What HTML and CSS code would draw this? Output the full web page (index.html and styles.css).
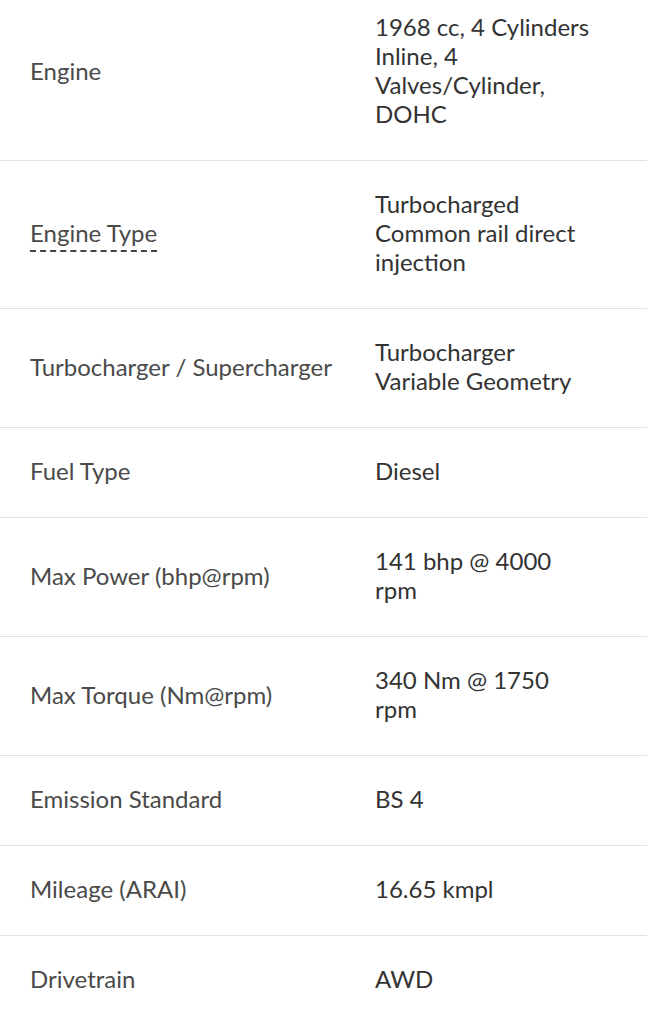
FILE: index.html
```html
<!DOCTYPE html>
<html>
<head>
<meta charset="utf-8">
<link rel="stylesheet" href="styles.css">
</head>
<body>
<table class="spec">
  <tr><td class="label">Engine</td><td class="value"><div class="val">1968 cc, 4 Cylinders Inline, 4 Valves/Cylinder, DOHC</div></td></tr>
  <tr><td class="label"><span class="hint">Engine Type</span></td><td class="value"><div class="val">Turbocharged Common rail direct injection</div></td></tr>
  <tr><td class="label">Turbocharger / Supercharger</td><td class="value"><div class="val">Turbocharger Variable Geometry</div></td></tr>
  <tr><td class="label">Fuel Type</td><td class="value"><div class="val">Diesel</div></td></tr>
  <tr><td class="label">Max Power (bhp@rpm)</td><td class="value"><div class="val">141 bhp @ 4000 rpm</div></td></tr>
  <tr><td class="label">Max Torque (Nm@rpm)</td><td class="value"><div class="val">340 Nm @ 1750 rpm</div></td></tr>
  <tr><td class="label">Emission Standard</td><td class="value"><div class="val">BS 4</div></td></tr>
  <tr><td class="label">Mileage (ARAI)</td><td class="value"><div class="val">16.65 kmpl</div></td></tr>
  <tr><td class="label">Drivetrain</td><td class="value"><div class="val">AWD</div></td></tr>
</table>
</body>
</html>
```
FILE: styles.css
```css
html, body {
  margin: 0;
  padding: 0;
  background: #ffffff;
}
body {
  font-family: Lato, "Open Sans", sans-serif;
  font-size: 24px;
  line-height: 29px;
  overflow: hidden;
}
.spec {
  width: 647px;
  border-collapse: collapse;
  margin-top: -16px;
}
.spec td {
  padding: 28px 0 32px 30px;
  vertical-align: middle;
  border-bottom: 1px solid #e2e2e2;
}
.spec .label {
  width: 315px;
  color: #4a4a4a;
}
.spec .value {
  color: #333333;
}
.val {
  width: 218px;
}
.hint {
  border-bottom: 2px dashed #444;
  padding-bottom: 3px;
}
```
